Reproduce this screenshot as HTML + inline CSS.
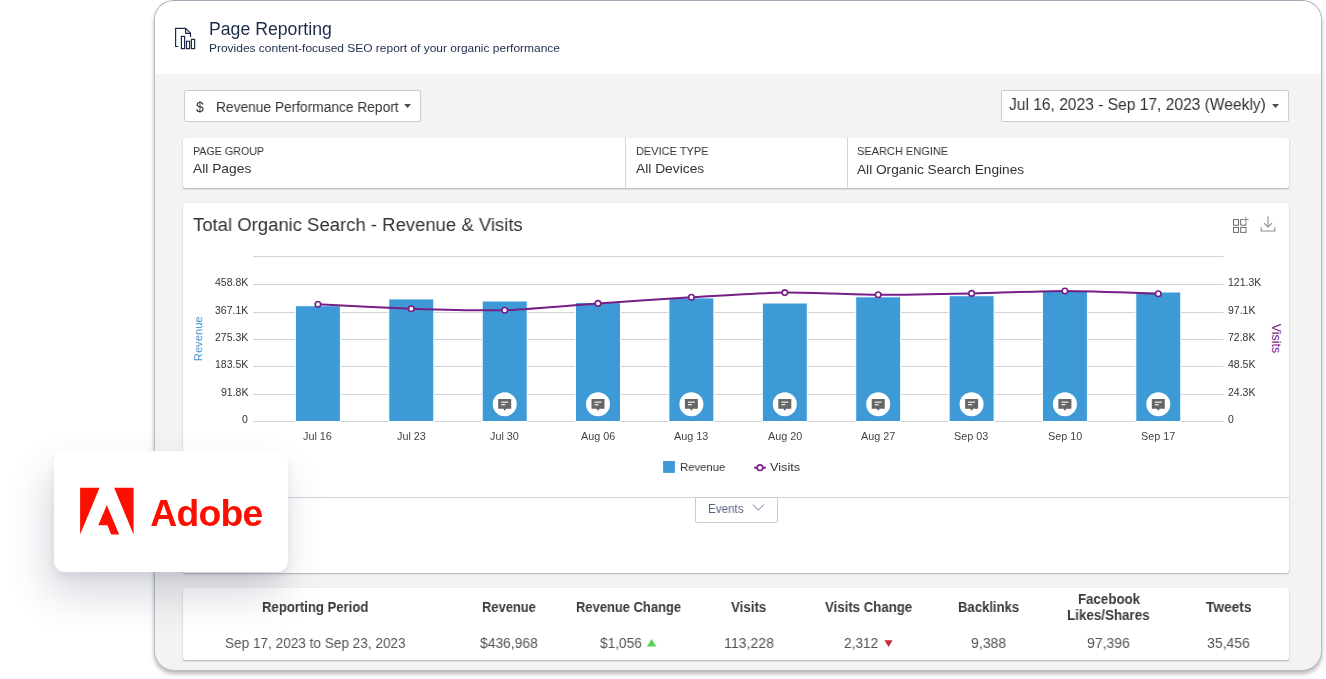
<!DOCTYPE html>
<html><head><meta charset="utf-8">
<style>
*{margin:0;padding:0;box-sizing:border-box}
html,body{width:1326px;height:679px;overflow:hidden;background:#fff;font-family:"Liberation Sans",sans-serif}
.abs{position:absolute}
.t{position:absolute;white-space:nowrap;line-height:1;will-change:transform}
#frame{position:absolute;left:154px;top:0;width:1168px;height:671px;border:1.3px solid #b8bac8;border-top-color:#a3a6b4;border-radius:20px;background:#f3f3f3;overflow:hidden;box-shadow:0 3px 4px rgba(0,0,0,0.28)}
#hdr{position:absolute;left:0;top:0;width:100%;height:73px;background:#fff}
.card{position:absolute;background:#fff;border-radius:3px;box-shadow:0 1px 2px rgba(0,0,0,0.28)}
.dd{position:absolute;background:#fff;border:1px solid #cacdd9;border-radius:2px}
.caret{position:absolute;width:0;height:0;border-left:3.3px solid transparent;border-right:3.3px solid transparent;border-top:3.8px solid #444}
</style></head><body>

<div id="frame"><div id="hdr"></div></div>

<!-- dropdowns -->
<div class="dd" style="left:183.5px;top:90px;width:237.5px;height:31.8px"></div>

<div class="dd" style="left:1001px;top:90px;width:288px;height:31.8px"></div>


<!-- filter bar -->
<div class="card" style="left:183px;top:138px;width:1105.7px;height:50px"></div>
<div class="abs" style="left:625px;top:138px;width:1px;height:50px;background:#d6d6d6"></div>
<div class="abs" style="left:847px;top:138px;width:1px;height:50px;background:#d6d6d6"></div>

<!-- chart card -->
<div class="card" style="left:183px;top:203px;width:1105.7px;height:370px"></div>
<div class="abs" style="left:183px;top:497px;width:1105.7px;height:1px;background:#d0d3de"></div>
<div class="abs" style="left:695.2px;top:497px;width:82.8px;height:25.8px;border:1px solid #c9cbda;border-radius:0 0 2px 2px"></div>

<!-- table card -->
<div class="card" style="left:183px;top:588px;width:1105.7px;height:72px"></div>

<svg class="abs" style="left:0;top:0" width="1326" height="679" viewBox="0 0 1326 679">
<line x1="253" x2="1223.5" y1="256.5" y2="256.5" stroke="#d0d3de" stroke-width="1"/>
<line x1="253" x2="1223.5" y1="284.5" y2="284.5" stroke="#d0d3de" stroke-width="1"/>
<line x1="253" x2="1223.5" y1="312.5" y2="312.5" stroke="#d0d3de" stroke-width="1"/>
<line x1="253" x2="1223.5" y1="339.5" y2="339.5" stroke="#d0d3de" stroke-width="1"/>
<line x1="253" x2="1223.5" y1="366.5" y2="366.5" stroke="#d0d3de" stroke-width="1"/>
<line x1="253" x2="1223.5" y1="394.5" y2="394.5" stroke="#d0d3de" stroke-width="1"/>
<line x1="253" x2="1223.5" y1="421.5" y2="421.5" stroke="#d0d3de" stroke-width="1"/>
<rect x="295.4" y="305.7" width="45" height="115.8" fill="#3d9ad6" stroke="#fff" stroke-width="1"/>
<rect x="388.8" y="298.9" width="45" height="122.6" fill="#3d9ad6" stroke="#fff" stroke-width="1"/>
<rect x="482.2" y="301.0" width="45" height="120.5" fill="#3d9ad6" stroke="#fff" stroke-width="1"/>
<rect x="575.5" y="302.6" width="45" height="118.9" fill="#3d9ad6" stroke="#fff" stroke-width="1"/>
<rect x="668.9" y="297.9" width="45" height="123.6" fill="#3d9ad6" stroke="#fff" stroke-width="1"/>
<rect x="762.3" y="303.0" width="45" height="118.5" fill="#3d9ad6" stroke="#fff" stroke-width="1"/>
<rect x="855.7" y="296.8" width="45" height="124.7" fill="#3d9ad6" stroke="#fff" stroke-width="1"/>
<rect x="949.1" y="295.7" width="45" height="125.8" fill="#3d9ad6" stroke="#fff" stroke-width="1"/>
<rect x="1042.4" y="290.9" width="45" height="130.6" fill="#3d9ad6" stroke="#fff" stroke-width="1"/>
<rect x="1135.8" y="292.0" width="45" height="129.5" fill="#3d9ad6" stroke="#fff" stroke-width="1"/>
<circle cx="504.7" cy="404.2" r="12" fill="#fff"/>
<path d="M498.2 399h13v9.7h-5l-1.5 2-1.5-2h-5z" fill="#666"/>
<rect x="501.2" y="401.6" width="7" height="1.1" fill="#fff"/>
<rect x="501.2" y="404.2" width="4" height="1.1" fill="#fff"/>
<circle cx="598.0" cy="404.2" r="12" fill="#fff"/>
<path d="M591.5 399h13v9.7h-5l-1.5 2-1.5-2h-5z" fill="#666"/>
<rect x="594.5" y="401.6" width="7" height="1.1" fill="#fff"/>
<rect x="594.5" y="404.2" width="4" height="1.1" fill="#fff"/>
<circle cx="691.4" cy="404.2" r="12" fill="#fff"/>
<path d="M684.9 399h13v9.7h-5l-1.5 2-1.5-2h-5z" fill="#666"/>
<rect x="687.9" y="401.6" width="7" height="1.1" fill="#fff"/>
<rect x="687.9" y="404.2" width="4" height="1.1" fill="#fff"/>
<circle cx="784.8" cy="404.2" r="12" fill="#fff"/>
<path d="M778.3 399h13v9.7h-5l-1.5 2-1.5-2h-5z" fill="#666"/>
<rect x="781.3" y="401.6" width="7" height="1.1" fill="#fff"/>
<rect x="781.3" y="404.2" width="4" height="1.1" fill="#fff"/>
<circle cx="878.2" cy="404.2" r="12" fill="#fff"/>
<path d="M871.7 399h13v9.7h-5l-1.5 2-1.5-2h-5z" fill="#666"/>
<rect x="874.7" y="401.6" width="7" height="1.1" fill="#fff"/>
<rect x="874.7" y="404.2" width="4" height="1.1" fill="#fff"/>
<circle cx="971.6" cy="404.2" r="12" fill="#fff"/>
<path d="M965.1 399h13v9.7h-5l-1.5 2-1.5-2h-5z" fill="#666"/>
<rect x="968.1" y="401.6" width="7" height="1.1" fill="#fff"/>
<rect x="968.1" y="404.2" width="4" height="1.1" fill="#fff"/>
<circle cx="1064.9" cy="404.2" r="12" fill="#fff"/>
<path d="M1058.4 399h13v9.7h-5l-1.5 2-1.5-2h-5z" fill="#666"/>
<rect x="1061.4" y="401.6" width="7" height="1.1" fill="#fff"/>
<rect x="1061.4" y="404.2" width="4" height="1.1" fill="#fff"/>
<circle cx="1158.3" cy="404.2" r="12" fill="#fff"/>
<path d="M1151.8 399h13v9.7h-5l-1.5 2-1.5-2h-5z" fill="#666"/>
<rect x="1154.8" y="401.6" width="7" height="1.1" fill="#fff"/>
<rect x="1154.8" y="404.2" width="4" height="1.1" fill="#fff"/>
<path d="M317.9 304.3 C327.2 304.7 392.6 308.1 411.3 308.7 C430.0 309.3 486.0 310.7 504.7 310.2 C523.3 309.7 579.4 304.7 598.0 303.4 C616.7 302.1 672.7 298.4 691.4 297.3 C710.1 296.2 766.1 292.8 784.8 292.6 C803.5 292.3 859.5 294.7 878.2 294.8 C896.9 294.9 952.9 293.8 971.6 293.4 C990.2 293.0 1046.3 291.0 1064.9 291.0 C1083.6 291.0 1149.0 293.4 1158.3 293.7" fill="none" stroke="#761d86" stroke-width="2"/>
<circle cx="317.9" cy="304.3" r="2.75" fill="#fff" stroke="#761d86" stroke-width="1.6"/>
<circle cx="411.3" cy="308.7" r="2.75" fill="#fff" stroke="#761d86" stroke-width="1.6"/>
<circle cx="504.7" cy="310.2" r="2.75" fill="#fff" stroke="#761d86" stroke-width="1.6"/>
<circle cx="598.0" cy="303.4" r="2.75" fill="#fff" stroke="#761d86" stroke-width="1.6"/>
<circle cx="691.4" cy="297.3" r="2.75" fill="#fff" stroke="#761d86" stroke-width="1.6"/>
<circle cx="784.8" cy="292.6" r="2.75" fill="#fff" stroke="#761d86" stroke-width="1.6"/>
<circle cx="878.2" cy="294.8" r="2.75" fill="#fff" stroke="#761d86" stroke-width="1.6"/>
<circle cx="971.6" cy="293.4" r="2.75" fill="#fff" stroke="#761d86" stroke-width="1.6"/>
<circle cx="1064.9" cy="291.0" r="2.75" fill="#fff" stroke="#761d86" stroke-width="1.6"/>
<circle cx="1158.3" cy="293.7" r="2.75" fill="#fff" stroke="#761d86" stroke-width="1.6"/>

<path d="M404.1 104.1H411L407.55 108Z" fill="#4a4a4a"/>
<path d="M1272.1 104.1H1279L1275.55 108Z" fill="#4a4a4a"/>
<!-- header icon -->
<g fill="none" stroke="#1d2b4b" stroke-width="1.2" stroke-linejoin="miter">
  <path d="M178.5 46.5H175.6V28.4H185.6L190.5 33.2V37.1"/>
  <path d="M185.6 28.4V33.3H190.5"/>
  <rect x="181.4" y="36.4" width="3.2" height="12.2"/>
  <rect x="186.5" y="41.3" width="3.1" height="7.3"/>
  <rect x="191.4" y="39.4" width="3.2" height="9.2"/>
</g>
<!-- grid-plus icon -->
<g fill="none" stroke="#6e6e6e" stroke-width="1">
  <rect x="1233.5" y="219.6" width="5" height="5.6"/>
  <path d="M1243 219.6H1240.7V225.2H1246V222.5"/>
  <rect x="1233.5" y="227.4" width="5" height="5"/>
  <rect x="1240.7" y="227.4" width="5.3" height="5"/>
  <path d="M1245.9 216.8V222.2M1243.3 219.5H1248.6" stroke="#888"/>
</g>
<!-- download icon -->
<g fill="none" stroke="#8a8a8a" stroke-width="1.1">
  <path d="M1268 216.3V227"/>
  <path d="M1263.9 223.1L1268 227L1272.1 223.1"/>
  <path d="M1261.2 227.2V231H1274.8V227.2"/>
</g>
<!-- legend -->
<rect x="663.1" y="461" width="11.8" height="11.9" fill="#3d9ad6"/>
<line x1="754.2" x2="765.8" y1="467.7" y2="467.7" stroke="#761d86" stroke-width="2"/>
<circle cx="760" cy="467.7" r="2.8" fill="#fff" stroke="#761d86" stroke-width="1.6"/>
<!-- events chevron -->
<path d="M753 504.5L758.4 510.2L763.8 504.5" fill="none" stroke="#5b6584" stroke-width="0.9"/>
<!-- rotated axis titles -->
<text transform="translate(202.3 338.8) rotate(-90)" text-anchor="middle" font-family="Liberation Sans" font-size="11.2" fill="#3d9ad6">Revenue</text>
<text transform="translate(1272.3 338.5) rotate(90)" text-anchor="middle" font-family="Liberation Sans" font-size="12.5" fill="#7a1e8c">Visits</text>
<!-- triangles -->
<path d="M646.9 646.5L651.65 638.9L656.4 646.5Z" fill="#5ad35a"/>
<path d="M884.5 640.2L892.6 640.2L888.55 647Z" fill="#c8283c"/>
</svg>

<div class="t" style="left:209.09px;top:20.89px;font-size:17.5px;font-weight:400;color:#1d2b4b;transform:scaleX(1.0098);transform-origin:0 0;">Page Reporting</div>
<div class="t" style="left:209.32px;top:41.70px;font-size:11.7px;font-weight:400;color:#1d2b4b;transform:scaleX(1.0232);transform-origin:0 0;">Provides content-focused SEO report of your organic performance</div>
<div class="t" style="left:196.04px;top:99.95px;font-size:14px;font-weight:400;color:#333;">$</div>
<div class="t" style="left:215.95px;top:99.95px;font-size:14px;font-weight:400;color:#333;transform:scaleX(0.9817);transform-origin:0 0;">Revenue Performance Report</div>
<div class="t" style="left:1008.78px;top:95.63px;font-size:16.5px;font-weight:400;color:#333;transform:scaleX(0.9439);transform-origin:0 0;">Jul 16, 2023 - Sep 17, 2023 (Weekly)</div>
<div class="t" style="left:193.27px;top:144.88px;font-size:11.6px;font-weight:400;color:#333;transform:scaleX(0.9230);transform-origin:0 0;">PAGE GROUP</div>
<div class="t" style="left:192.75px;top:162.16px;font-size:13.4px;font-weight:400;color:#333;transform:scaleX(1.0305);transform-origin:0 0;">All Pages</div>
<div class="t" style="left:636.16px;top:144.88px;font-size:11.6px;font-weight:400;color:#333;transform:scaleX(0.9478);transform-origin:0 0;">DEVICE TYPE</div>
<div class="t" style="left:636.05px;top:162.16px;font-size:13.4px;font-weight:400;color:#333;transform:scaleX(1.0297);transform-origin:0 0;">All Devices</div>
<div class="t" style="left:857.06px;top:144.88px;font-size:11.6px;font-weight:400;color:#333;transform:scaleX(0.9488);transform-origin:0 0;">SEARCH ENGINE</div>
<div class="t" style="left:856.95px;top:162.66px;font-size:13.4px;font-weight:400;color:#333;transform:scaleX(1.0204);transform-origin:0 0;">All Organic Search Engines</div>
<div class="t" style="left:192.86px;top:215.79px;font-size:18.8px;font-weight:400;color:#333;transform:scaleX(0.9849);transform-origin:0 0;">Total Organic Search - Revenue &amp; Visits</div>
<div class="t" style="left:215.04px;top:276.71px;font-size:10.5px;font-weight:400;color:#333;">458.8K</div>
<div class="t" style="left:215.04px;top:304.51px;font-size:10.5px;font-weight:400;color:#333;">367.1K</div>
<div class="t" style="left:215.04px;top:331.71px;font-size:10.5px;font-weight:400;color:#333;">275.3K</div>
<div class="t" style="left:215.04px;top:359.21px;font-size:10.5px;font-weight:400;color:#333;">183.5K</div>
<div class="t" style="left:220.87px;top:386.71px;font-size:10.5px;font-weight:400;color:#333;">91.8K</div>
<div class="t" style="left:242.48px;top:413.91px;font-size:10.5px;font-weight:400;color:#333;">0</div>
<div class="t" style="left:1227.58px;top:276.71px;font-size:10.5px;font-weight:400;color:#333;">121.3K</div>
<div class="t" style="left:1227.58px;top:304.51px;font-size:10.5px;font-weight:400;color:#333;">97.1K</div>
<div class="t" style="left:1227.58px;top:331.71px;font-size:10.5px;font-weight:400;color:#333;">72.8K</div>
<div class="t" style="left:1227.58px;top:359.21px;font-size:10.5px;font-weight:400;color:#333;">48.5K</div>
<div class="t" style="left:1227.58px;top:386.71px;font-size:10.5px;font-weight:400;color:#333;">24.3K</div>
<div class="t" style="left:1227.58px;top:413.91px;font-size:10.5px;font-weight:400;color:#333;">0</div>
<div class="t" style="left:303.49px;top:430.56px;font-size:10.8px;font-weight:400;color:#444;">Jul 16</div>
<div class="t" style="left:396.87px;top:430.56px;font-size:10.8px;font-weight:400;color:#444;">Jul 23</div>
<div class="t" style="left:490.25px;top:430.56px;font-size:10.8px;font-weight:400;color:#444;">Jul 30</div>
<div class="t" style="left:580.92px;top:430.56px;font-size:10.8px;font-weight:400;color:#444;">Aug 06</div>
<div class="t" style="left:674.30px;top:430.56px;font-size:10.8px;font-weight:400;color:#444;">Aug 13</div>
<div class="t" style="left:767.68px;top:430.56px;font-size:10.8px;font-weight:400;color:#444;">Aug 20</div>
<div class="t" style="left:861.06px;top:430.56px;font-size:10.8px;font-weight:400;color:#444;">Aug 27</div>
<div class="t" style="left:954.44px;top:430.56px;font-size:10.8px;font-weight:400;color:#444;">Sep 03</div>
<div class="t" style="left:1047.82px;top:430.56px;font-size:10.8px;font-weight:400;color:#444;">Sep 10</div>
<div class="t" style="left:1141.20px;top:430.56px;font-size:10.8px;font-weight:400;color:#444;">Sep 17</div>
<div class="t" style="left:680.15px;top:460.80px;font-size:11.7px;font-weight:400;color:#333;transform:scaleX(0.9681);transform-origin:0 0;">Revenue</div>
<div class="t" style="left:770.49px;top:460.80px;font-size:11.7px;font-weight:400;color:#333;transform:scaleX(1.0865);transform-origin:0 0;">Visits</div>
<div class="t" style="left:707.63px;top:502.54px;font-size:12px;font-weight:400;color:#5b6584;transform:scaleX(0.9712);transform-origin:0 0;">Events</div>
<div class="t" style="left:262.33px;top:600.15px;font-size:14px;font-weight:700;color:#3a3a3a;transform:scaleX(0.9365);transform-origin:0 0;">Reporting Period</div>
<div class="t" style="left:481.68px;top:600.15px;font-size:14px;font-weight:700;color:#3a3a3a;transform:scaleX(0.9224);transform-origin:0 0;">Revenue</div>
<div class="t" style="left:576.28px;top:600.15px;font-size:14px;font-weight:700;color:#3a3a3a;transform:scaleX(0.9247);transform-origin:0 0;">Revenue Change</div>
<div class="t" style="left:731.07px;top:600.15px;font-size:14px;font-weight:700;color:#3a3a3a;transform:scaleX(0.9503);transform-origin:0 0;">Visits</div>
<div class="t" style="left:825.42px;top:600.15px;font-size:14px;font-weight:700;color:#3a3a3a;transform:scaleX(0.9440);transform-origin:0 0;">Visits Change</div>
<div class="t" style="left:958.23px;top:600.15px;font-size:14px;font-weight:700;color:#3a3a3a;transform:scaleX(0.9353);transform-origin:0 0;">Backlinks</div>
<div class="t" style="left:1077.77px;top:592.25px;font-size:14px;font-weight:700;color:#3a3a3a;transform:scaleX(0.9496);transform-origin:0 0;">Facebook</div>
<div class="t" style="left:1067.46px;top:607.65px;font-size:14px;font-weight:700;color:#3a3a3a;transform:scaleX(0.9570);transform-origin:0 0;">Likes/Shares</div>
<div class="t" style="left:1206.30px;top:600.15px;font-size:14px;font-weight:700;color:#3a3a3a;transform:scaleX(0.9775);transform-origin:0 0;">Tweets</div>
<div class="t" style="left:225.21px;top:635.90px;font-size:14.3px;font-weight:400;color:#555;transform:scaleX(0.9505);transform-origin:0 0;">Sep 17, 2023 to Sep 23, 2023</div>
<div class="t" style="left:479.60px;top:635.90px;font-size:14.3px;font-weight:400;color:#555;transform:scaleX(0.9693);transform-origin:0 0;">$436,968</div>
<div class="t" style="left:600.15px;top:635.90px;font-size:14.3px;font-weight:400;color:#555;transform:scaleX(0.9580);transform-origin:0 0;">$1,056</div>
<div class="t" style="left:723.74px;top:635.90px;font-size:14.3px;font-weight:400;color:#555;transform:scaleX(0.9862);transform-origin:0 0;">113,228</div>
<div class="t" style="left:844.10px;top:635.90px;font-size:14.3px;font-weight:400;color:#555;transform:scaleX(0.9556);transform-origin:0 0;">2,312</div>
<div class="t" style="left:970.79px;top:635.90px;font-size:14.3px;font-weight:400;color:#555;transform:scaleX(0.9845);transform-origin:0 0;">9,388</div>
<div class="t" style="left:1087.34px;top:635.90px;font-size:14.3px;font-weight:400;color:#555;transform:scaleX(0.9814);transform-origin:0 0;">97,396</div>
<div class="t" style="left:1207.14px;top:635.90px;font-size:14.3px;font-weight:400;color:#555;transform:scaleX(0.9814);transform-origin:0 0;">35,456</div>

<!-- adobe card -->
<div class="abs" style="left:54px;top:451px;width:234px;height:121px;background:#fff;border-radius:11px;box-shadow:0 5px 8px rgba(40,45,70,0.07),-6px 22px 40px rgba(50,60,90,0.2)"></div>
<svg class="abs" style="left:0;top:0" width="1326" height="679" viewBox="0 0 1326 679">
  <g transform="translate(80.1 487.8) scale(1.783 1.76)" fill="#fa0f00">
    <path d="M19.1 0H30V26.6Z"/>
    <path d="M10.9 0H0V26.6Z"/>
    <path d="M15 9.8L21.9 26.6H17.4L15.3 21.3H10.2Z"/>
  </g>
  <text x="150.3" y="526.1" font-family="Liberation Sans" font-weight="bold" font-size="37.3" letter-spacing="-0.75" fill="#fa0f00">Adobe</text>
</svg>
</body></html>
